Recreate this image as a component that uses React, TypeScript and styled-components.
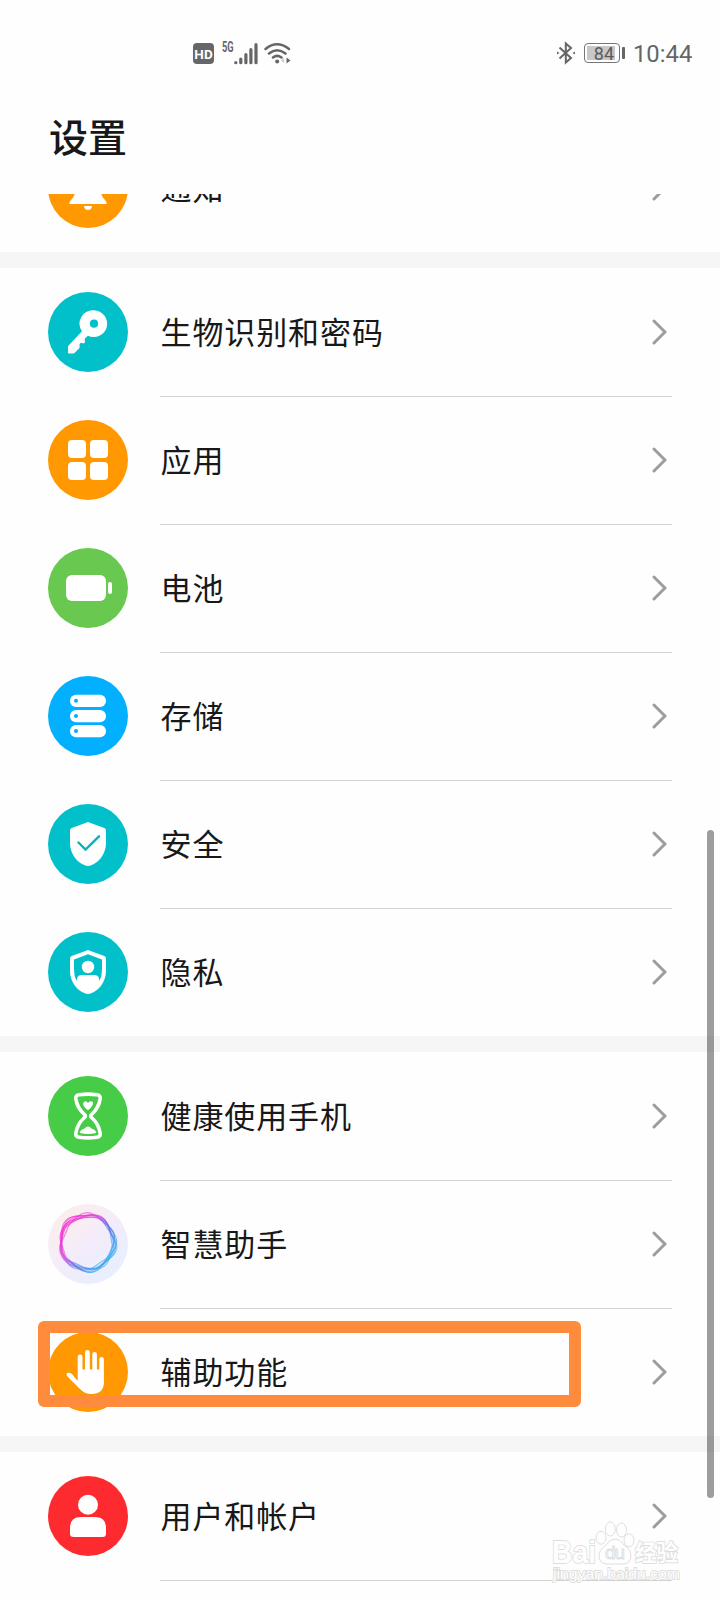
import React from "react";
import styled, { createGlobalStyle } from "styled-components";

const GlobalStyle = createGlobalStyle`
  * { box-sizing: border-box; }
  body {
    margin: 0;
    background: #fefefe;
    font-family: "Noto Sans CJK SC", "Noto Sans", sans-serif;
    color: #181818;
  }
`;

const Screen = styled.div`
  position: relative;
  display: flex;
  flex-direction: column;
  width: 720px;
  height: 1600px;
  overflow: hidden;
  background: #fefefe;
`;

const StatusBar = styled.div`
  display: flex;
  justify-content: space-between;
  align-items: center;
  height: 106px;
  padding: 0 29px 0 193px;
  font-family: Roboto, sans-serif;
  color: #666;
`;

const StatusGroup = styled.div`
  display: flex;
  align-items: center;
`;

const HdBadge = styled.span`
  width: 21px;
  height: 21px;
  margin-right: 8px;
  border-radius: 4px;
  background: #666;
  color: #fff;
  font-size: 13.5px;
  font-weight: 700;
  line-height: 22px;
  text-align: center;
`;

const NetworkLabel = styled.span`
  align-self: flex-start;
  width: 12px;
  margin-top: -1px;
  font-size: 14px;
  font-weight: 700;
  line-height: 12px;
  transform: scaleX(0.66);
  transform-origin: left center;
`;

const BatteryShell = styled.span`
  display: flex;
  width: 36px;
  height: 20px;
  margin-left: 9px;
  padding: 2px;
  border: 1px solid #777;
  border-radius: 4px;
`;

const BatteryLevel = styled.span`
  width: 28px;
  height: 14px;
  background: #c8c8c8;
  color: #5a5a5a;
  font-size: 18px;
  line-height: 15px;
  text-align: right;
  padding-right: 1px;
`;

const BatteryTip = styled.span`
  width: 3px;
  height: 12px;
  margin: 0 8px 0 2px;
  border-radius: 1px;
  background: #666;
`;

const Clock = styled.span`
  width: 58px;
  padding-top: 1px;
  font-size: 23.8px;
  line-height: 28px;
  white-space: nowrap;
`;

const TitleBar = styled.header`
  height: 88px;
  padding: 0 49px;
`;

const Title = styled.h1`
  margin: 0;
  font-size: 39px;
  font-weight: 500;
  line-height: 59px;
`;

const List = styled.main`
  display: flex;
  flex: 1;
  flex-direction: column;
  min-height: 0;
  overflow: hidden;
`;

const Group = styled.section<{ $scrolled?: number }>`
  flex: none;
  margin-top: ${(p) => -(p.$scrolled ?? 0)}px;
`;

const Divider = styled.div`
  flex: none;
  height: 16px;
  background: #f6f6f6;
`;

const Row = styled.div`
  display: flex;
  align-items: center;
  height: 128px;
  padding: 0 48px;
`;

const RowIcon = styled.svg`
  flex: none;
  width: 80px;
  height: 80px;
  margin-right: 32px;
`;

const RowBody = styled.div<{ $line?: boolean }>`
  display: flex;
  flex: 1;
  align-items: center;
  justify-content: space-between;
  height: 100%;
  padding-right: 5px;
  box-shadow: ${(p) => (p.$line ? "inset 0 1px #d2d2d2" : "none")};
`;

const Label = styled.span`
  padding: 0 0 2px 0.5px;
  font-size: 31px;
  letter-spacing: 0.9px;
  line-height: 48px;
`;

const ScrollThumb = styled.div`
  position: absolute;
  top: 830px;
  right: 6px;
  width: 7px;
  height: 668px;
  border-radius: 4px;
  background: rgba(0, 0, 0, 0.38);
`;

const Highlight = styled.div`
  position: absolute;
  top: 1321px;
  left: 38px;
  width: 543px;
  height: 86px;
  border: 12px solid #ff8b3d;
  border-radius: 6px;
`;

const Watermark = styled.svg`
  position: absolute;
  top: 1514px;
  left: 546px;
  width: 142px;
  height: 76px;
`;

const Chevron = () => (
  <svg width="16" height="26" viewBox="0 0 16 26" fill="none">
    <path d="M3 2 14 13 3 24" stroke="#9d9d9d" strokeWidth="3" strokeLinecap="round" />
  </svg>
);

const SHIELD = "M38.800 18.400Q40 17.700 41.200 18.400L56.300 24q1.700.6 1.700 2.600V39C58 50 50.500 59 42.500 61.600Q40 62.400 37.500 61.600C29.500 59 22 50 22 39V26.600Q22 24.600 23.700 24Z";

// Closed wavy strands woven together around the assistant's ring.
const strand = (phase: number, amp: number, radius: number) => {
  const points: string[] = [];
  for (let i = 0; i < 120; i++) {
    const t = (i / 120) * Math.PI * 2;
    const r = radius + amp * Math.cos(5 * t + phase) + 0.9 * Math.cos(2 * t + phase * 2);
    points.push(`${(39.3 + r * Math.cos(t)).toFixed(2)} ${(38.4 + r * Math.sin(t)).toFixed(2)}`);
  }
  return `M${points.join("L")}Z`;
};

const STRANDS = [
  strand(-1.2, 1.5, 27.6),
  strand(-0.5, 1.3, 26.2),
  strand(0.2, 1.4, 27),
  strand(-2, 1.2, 25.6),
  strand(0.9, 1, 26.4),
  strand(-0.9, 1.8, 28),
  strand(-1.6, 0.9, 27),
  strand(1.6, 1.6, 27.2),
];

const glyphs: Record<string, React.ReactNode> = {
  bell: (
    <>
      <path d="M27 34h26v10q0 4 4 8 2 2.500 1.500 4H21.500q-.5-1.500 1.500-4 4-4 4-8Z" />
      <path d="M36 58h8q-.5 4-4 4t-4-4Z" />
    </>
  ),
  key: (
    <path
      fillRule="evenodd"
      d="M46 18.300a13.400 13.400 0 1 1-6.200 25.400L36.500 47q.8 1.700.2 4-2 .5-3.900-.3-.9 1.100-1.400 2 .7 2-.2 3.500L27 60.500q-.8.900-2 .9h-4.200q-.8 0-.8-.8v-5.800q0-.8.600-1.400L34 39.300A13.400 13.400 0 0 1 46 18.300Zm0 9.300a4.100 4.100 0 1 0 0 8.200 4.100 4.100 0 0 0 0-8.200Z"
    />
  ),
  apps: (
    <>
      <rect x="20" y="20" width="18" height="18" rx="4" />
      <rect x="42" y="20" width="18" height="18" rx="4" />
      <rect x="20" y="42" width="18" height="18" rx="4" />
      <rect x="42" y="42" width="18" height="18" rx="4" />
    </>
  ),
  battery: (
    <>
      <rect x="18" y="27" width="40" height="26" rx="6" />
      <rect x="60" y="34" width="4" height="12" rx="2" />
    </>
  ),
  storage: (
    <>
      {[18.8, 34, 49].map((y) => (
        <React.Fragment key={y}>
          <rect x="22" y={y} width="36" height="12.200" rx="6" />
          <circle cx="28" cy={y + 6} r="2" fill="#02acff" />
        </React.Fragment>
      ))}
    </>
  ),
  security: (
    <>
      <path d={SHIELD} />
      <path d="M30.500 38.500 37.500 45.500 51 32.300" fill="none" stroke="#02b4be" strokeWidth="2.400" strokeLinecap="round" />
    </>
  ),
  privacy: (
    <>
      <path d={SHIELD} />
      <path d="M40 22.300 54 27.500V38q0 6-2.500 11Q51 43 47 43H33Q29 43 28.500 49 26 44 26 38V27.500Z" fill="#02c0ca" />
      <circle cx="40" cy="35" r="6.200" />
    </>
  ),
  hourglass: (
    <>
      <path
        d="M31 18.800Q40 17.500 49 18.800 52.500 19 52.200 22.500 51 32 43.500 38.500 42 40 43.500 41.500 51 48 52.200 57.500 52.500 61 49 61.200 40 62.500 31 61.200 27.500 61 27.800 57.500 29 48 36.500 41.500 38 40 36.500 38.500 29 32 27.800 22.500 27.500 19 31 18.800Z"
        fill="none"
        stroke="#fff"
        strokeWidth="3.600"
      />
      <path d="M40 27Q42 24 45 26 46 29.500 40 34.300 34 30 35.500 26.500 38 24 40 27Z" />
      <path d="M40 50.500q1.500 0 4 2.200 4 1.500 4.300 4.300-8.300 1.800-16.600 0 .300-2.800 4.300-4.300 2.500-2.200 4-2.200Z" />
    </>
  ),
  assistant: (
    <g fill="none" stroke="url(#ringStroke)" strokeWidth="1.200">
      {STRANDS.map((d, i) => (
        <path key={i} d={d} opacity="0.600" />
      ))}
    </g>
  ),
  hand: (
    <path d="M29.700 49V25a2.400 2.400 0 0 1 4.800 0V37.500h2.500V20.300a2.400 2.400 0 0 1 4.800 0V37.500h2.500V22.300a2.300 2.300 0 0 1 4.600 0V37.500h2.400V27.200a2.300 2.300 0 0 1 4.600 0V50Q55.900 62 43.500 62 36.500 62 31.500 56.500L19.500 44.500Q17.500 42 19.500 41q1.800-1 4.300.800Z" />
  ),
  user: (
    <>
      <circle cx="40" cy="28.700" r="10" />
      <path d="M33 41h14q11 0 11 11v5.500q0 3.500-3.500 3.500h-29q-3.500 0-3.500-3.500V52q0-11 11-11Z" />
    </>
  ),
};

type Item = { label: string; glyph: string; color: string };

const SettingRow = ({ item, line }: { item: Item; line?: boolean }) => (
  <Row>
    <RowIcon viewBox="0 0 80 80" fill="#fff">
      <circle cx="40" cy="40" r="40" fill={item.color} />
      {glyphs[item.glyph]}
    </RowIcon>
    <RowBody $line={line}>
      <Label>{item.label}</Label>
      <Chevron />
    </RowBody>
  </Row>
);

const systemItems: Item[] = [
  { label: "生物识别和密码", glyph: "key", color: "#02c0ca" },
  { label: "应用", glyph: "apps", color: "#ff9801" },
  { label: "电池", glyph: "battery", color: "#69c84f" },
  { label: "存储", glyph: "storage", color: "#02b0ff" },
  { label: "安全", glyph: "security", color: "#02c0ca" },
  { label: "隐私", glyph: "privacy", color: "#02c0ca" },
];

const assistItems: Item[] = [
  { label: "健康使用手机", glyph: "hourglass", color: "#47cc47" },
  { label: "智慧助手", glyph: "assistant", color: "url(#ringBack)" },
  { label: "辅助功能", glyph: "hand", color: "#ff9801" },
];

const GradientDefs = styled.svg`
  position: absolute;
  width: 0;
  height: 0;
`;

const Gradients = () => (
  <GradientDefs>
    <defs>
      <linearGradient id="ringBack" x1="0.1" y1="0.1" x2="0.8" y2="0.9">
        <stop offset="0" stopColor="#fcefe9" />
        <stop offset="0.500" stopColor="#f4ecfa" />
        <stop offset="1" stopColor="#e8effd" />
      </linearGradient>
      <linearGradient id="ringStroke" gradientUnits="userSpaceOnUse" x1="20" y1="20" x2="60" y2="54">
        <stop offset="0" stopColor="#f22fd0" />
        <stop offset="0.350" stopColor="#d64be0" />
        <stop offset="0.600" stopColor="#6673e6" />
        <stop offset="1" stopColor="#35aaf0" />
      </linearGradient>
    </defs>
  </GradientDefs>
);

const Signal = () => (
  <svg width="24" height="23" viewBox="0 0 24 23" stroke="#666" strokeWidth="3.200" strokeLinecap="round">
    <path d="M1.800 20.500v.200M6.800 17v3.700M11.900 12.500v8.200M16.900 7.500v13.200M22 2.500v18.200" />
  </svg>
);

const WifiSvg = styled.svg`
  width: 27px;
  height: 23px;
  margin-left: 6px;
`;

const Wifi = () => (
  <WifiSvg viewBox="0 0 27 23" fill="none" stroke="#666" strokeWidth="2.500" strokeLinecap="round">
    <path d="M1.500 7Q13 -2.500 25 7M5 11.500Q13 5 21.500 11.500M9 15.500Q13 12.300 17.500 15.500" />
    <circle cx="13.200" cy="19.500" r="2" fill="#666" stroke="none" />
    <path d="M22.500 15.500v6l4-3Z" fill="#666" stroke="none" />
    <path d="M20 16v5l-3-2.500Z" fill="#ccc" stroke="none" />
  </WifiSvg>
);

const Bluetooth = () => (
  <svg width="18" height="24" viewBox="0 0 18 24" fill="none" stroke="#666" strokeWidth="2">
    <path d="M2.500 6.500 14 17 8.800 21.500V2.500L14 7 2.500 17.500" />
    <path d="M0 10.500 2.500 12 0 13.500ZM18 10.500 15.500 12 18 13.500Z" fill="#666" stroke="none" />
  </svg>
);

export default function App() {
  return (
    <Screen>
      <GlobalStyle />
      <Gradients />
      <StatusBar>
        <StatusGroup>
          <HdBadge>HD</HdBadge>
          <NetworkLabel>5G</NetworkLabel>
          <Signal />
          <Wifi />
        </StatusGroup>
        <StatusGroup>
          <Bluetooth />
          <BatteryShell>
            <BatteryLevel>84</BatteryLevel>
          </BatteryShell>
          <BatteryTip />
          <Clock>10:44</Clock>
        </StatusGroup>
      </StatusBar>
      <TitleBar>
        <Title>设置</Title>
      </TitleBar>
      <List>
        <Group $scrolled={70}>
          <SettingRow item={{ label: "通知", glyph: "bell", color: "#ff9801" }} />
        </Group>
        <Divider />
        <Group>
          {systemItems.map((item, i) => (
            <SettingRow key={item.label} item={item} line={i > 0} />
          ))}
        </Group>
        <Divider />
        <Group>
          {assistItems.map((item, i) => (
            <SettingRow key={item.label} item={item} line={i > 0} />
          ))}
        </Group>
        <Divider />
        <Group>
          <SettingRow item={{ label: "用户和帐户", glyph: "user", color: "#fd2b2f" }} />
          <Row>
            <RowIcon />
            <RowBody $line />
          </Row>
        </Group>
      </List>
      <ScrollThumb />
      <Highlight />
      <Watermark viewBox="0 0 142 76" fill="#fefefe" stroke="#dedede" strokeWidth="1">
        <g fontFamily="Liberation Sans, Arial, sans-serif" fontWeight="700" paintOrder="stroke" strokeWidth="1.800">
          <text x="6" y="49" fontSize="31" textLength="44" lengthAdjust="spacingAndGlyphs">Bai</text>
          <text x="89" y="47" fontSize="23" fontFamily="Noto Sans CJK SC, sans-serif" textLength="43" lengthAdjust="spacingAndGlyphs">经验</text>
          <text x="7" y="65" fontSize="15" fontWeight="400" textLength="127" lengthAdjust="spacingAndGlyphs">jingyan.baidu.com</text>
        </g>
        <ellipse cx="64.300" cy="15" rx="5" ry="7" />
        <ellipse cx="75.500" cy="16" rx="5" ry="7" />
        <ellipse cx="55" cy="23.700" rx="5" ry="6.500" />
        <ellipse cx="83" cy="26.300" rx="5" ry="6.500" />
        <path d="M69 25q5 0 9 6 7 5 7 10.500 0 8.500-8 8.500H61q-8 0-8-8.500Q53 36 60 31q4-6 9-6Z" />
        <text x="59" y="45" fontSize="19" fontWeight="400" fontFamily="Liberation Sans, Arial, sans-serif" textLength="20">du</text>
      </Watermark>
    </Screen>
  );
}
